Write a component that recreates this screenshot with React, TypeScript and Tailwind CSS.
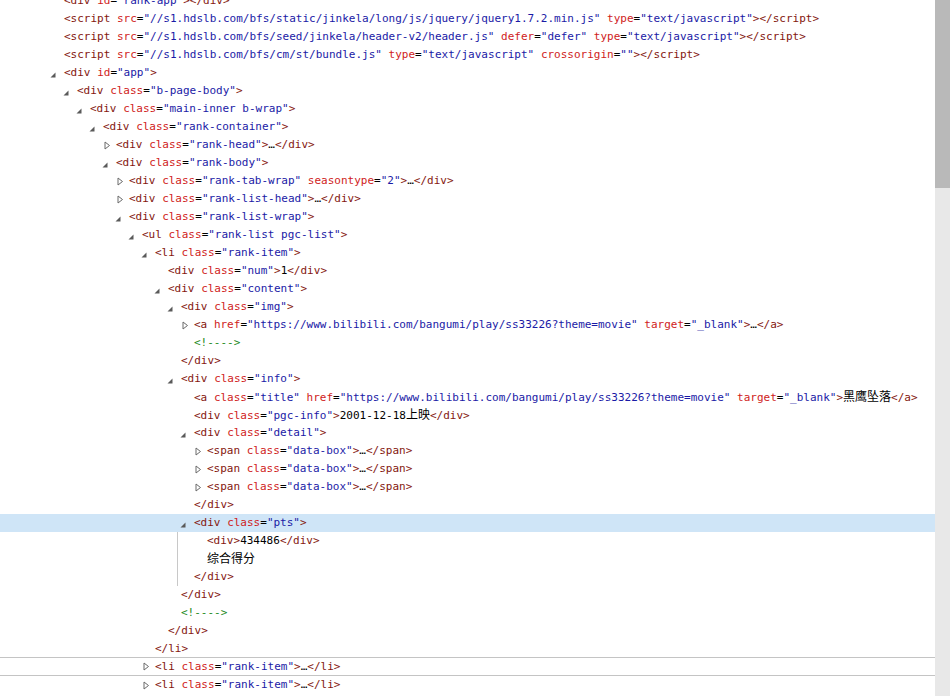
import React from "react";

type Row = [number, "open" | "closed" | "", string];

const rows: Row[] = [
  [0, "", `<div id="rank-app"></div>`],
  [0, "", `<script src="//s1.hdslb.com/bfs/static/jinkela/long/js/jquery/jquery1.7.2.min.js" type="text/javascript"></script>`],
  [0, "", `<script src="//s1.hdslb.com/bfs/seed/jinkela/header-v2/header.js" defer="defer" type="text/javascript"></script>`],
  [0, "", `<script src="//s1.hdslb.com/bfs/cm/st/bundle.js" type="text/javascript" crossorigin=""></script>`],
  [0, "open", `<div id="app">`],
  [1, "open", `<div class="b-page-body">`],
  [2, "open", `<div class="main-inner b-wrap">`],
  [3, "open", `<div class="rank-container">`],
  [4, "closed", `<div class="rank-head">…</div>`],
  [4, "open", `<div class="rank-body">`],
  [5, "closed", `<div class="rank-tab-wrap" seasontype="2">…</div>`],
  [5, "closed", `<div class="rank-list-head">…</div>`],
  [5, "open", `<div class="rank-list-wrap">`],
  [6, "open", `<ul class="rank-list pgc-list">`],
  [7, "open", `<li class="rank-item">`],
  [8, "", `<div class="num">1</div>`],
  [8, "open", `<div class="content">`],
  [9, "open", `<div class="img">`],
  [10, "closed", `<a href="https://www.bilibili.com/bangumi/play/ss33226?theme=movie" target="_blank">…</a>`],
  [10, "", `<!---->`],
  [9, "", `</div>`],
  [9, "open", `<div class="info">`],
  [10, "", `<a class="title" href="https://www.bilibili.com/bangumi/play/ss33226?theme=movie" target="_blank">黑鹰坠落</a>`],
  [10, "", `<div class="pgc-info">2001-12-18上映</div>`],
  [10, "open", `<div class="detail">`],
  [11, "closed", `<span class="data-box">…</span>`],
  [11, "closed", `<span class="data-box">…</span>`],
  [11, "closed", `<span class="data-box">…</span>`],
  [10, "", `</div>`],
  [10, "open", `<div class="pts">`],
  [11, "", `<div>434486</div>`],
  [11, "", `综合得分`],
  [10, "", `</div>`],
  [9, "", `</div>`],
  [9, "", `<!---->`],
  [8, "", `</div>`],
  [7, "", `</li>`],
  [7, "closed", `<li class="rank-item">…</li>`],
  [7, "closed", `<li class="rank-item">…</li>`],
];

const indent = [
  "pl-[50px]",
  "pl-[63px]",
  "pl-[76px]",
  "pl-[89px]",
  "pl-[102px]",
  "pl-[115px]",
  "pl-[128px]",
  "pl-[141px]",
  "pl-[154px]",
  "pl-[167px]",
  "pl-[180px]",
  "pl-[193px]",
];

const colors = {
  tag: "text-[#84170f]",
  attr: "text-[#d01c1c]",
  value: "text-[#1a1aa6]",
  text: "text-[#000]",
  comment: "text-[#238a23]",
};

type Seg = [keyof typeof colors, string];

// rough html tokenizer, good enough for the lines above
function tokenize(src: string): Seg[] {
  const out: Seg[] = [];
  let i = 0;
  while (i < src.length) {
    if (src.startsWith("<!--", i)) {
      const end = src.indexOf("-->", i) + 3;
      out.push(["comment", src.slice(i, end)]);
      i = end;
    } else if (src[i] === "<") {
      const m = /^<\/?[a-z]+/.exec(src.slice(i))!;
      out.push(["tag", m[0]]);
      i += m[0].length;
      while (i < src.length && src[i] !== ">") {
        const a = /^ ([a-z-]+)=("[^"]*")/.exec(src.slice(i));
        if (!a) break;
        out.push(["text", " "]);
        out.push(["attr", a[1]]);
        out.push(["text", "="]);
        out.push(["value", a[2]]);
        i += a[0].length;
      }
      out.push(["tag", ">"]);
      i += 1;
    } else {
      let end = src.indexOf("<", i);
      if (end < 0) end = src.length;
      out.push(["text", src.slice(i, end)]);
      i = end;
    }
  }
  return out;
}

function Text({ s }: { s: string }) {
  const parts = s.split(/([\u4e00-\u9fff]+)/);
  return (
    <>
      {parts.map((p, k) =>
        /[\u4e00-\u9fff]/.test(p) ? (
          <span
            key={k}
            className="text-[12px] font-['Noto_Sans_CJK_SC',sans-serif]"
          >
            {p}
          </span>
        ) : (
          <span key={k}>{p}</span>
        )
      )}
    </>
  );
}

function Arrow({ kind }: { kind: Row[1] }) {
  return (
    <span className="flex h-full w-[14px] shrink-0 items-center">
      {kind === "open" && (
        <svg width="6" height="6" viewBox="0 0 6 6" className="mt-[3px]">
          <path d="M5.5 0.5 L5.5 5.5 L0.5 5.5 Z" fill="#5a5a5a" />
        </svg>
      )}
      {kind === "closed" && (
        <svg width="8" height="9" viewBox="0 0 8 9" className="ml-[2px]">
          <path
            d="M1 1 L5.5 4.5 L1 8 Z"
            fill="none"
            stroke="#6a6a6a"
            strokeWidth="1"
          />
        </svg>
      )}
    </span>
  );
}

function Line({ row, idx }: { row: Row; idx: number }) {
  const [depth, kind, src] = row;
  const selected = idx === 29;
  const ruled = idx === 36 || idx === 37;
  return (
    <div
      className={
        "flex h-[18px] items-center whitespace-pre " +
        indent[depth] +
        (selected ? " bg-[#cfe5f7]" : "") +
        (ruled ? " border-b border-[#c4c4c4]" : "")
      }
    >
      <Arrow kind={kind} />
      <span>
        {tokenize(src).map(([c, t], k) => (
          <span key={k} className={colors[c]}>
            {c === "text" ? <Text s={t} /> : t}
          </span>
        ))}
      </span>
    </div>
  );
}

export default function App() {
  return (
    <div className="flex h-[696px] w-[950px] overflow-hidden bg-white">
      <div className="w-[935px] overflow-hidden font-['DejaVu_Sans_Mono',monospace] text-[11px] leading-[18px]">
        <div className="-mt-[8px]">
          {rows.slice(0, 30).map((r, i) => (
            <Line key={i} row={r} idx={i} />
          ))}
          <div className="relative">
            <div className="absolute bottom-0 left-[177px] top-0 w-px bg-[#c8c8c8]" />
            {rows.slice(30, 33).map((r, i) => (
              <Line key={i} row={r} idx={i + 30} />
            ))}
          </div>
          {rows.slice(33).map((r, i) => (
            <Line key={i} row={r} idx={i + 33} />
          ))}
        </div>
      </div>
      <div className="flex w-[15px] flex-col bg-[#e8e8e8]">
        <div className="h-[188px] bg-[#b9b9b9]" />
      </div>
    </div>
  );
}
